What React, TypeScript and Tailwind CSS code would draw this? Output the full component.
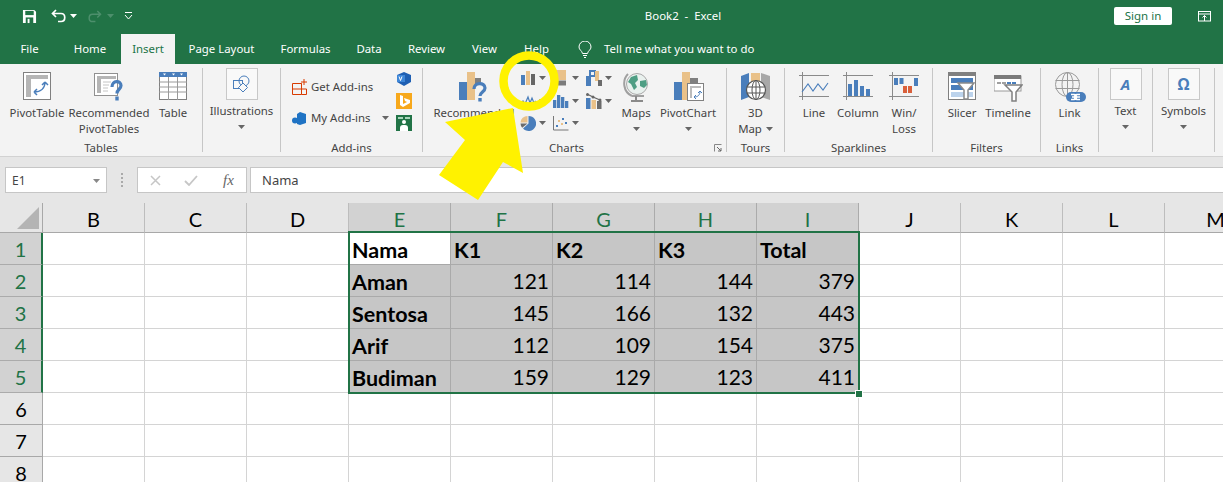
import React from "react";

const BLUE = "#4a7ebb";
const ORANGE = "#e9c189";
const GRAY = "#7f7f7f";

const Caret = ({ color = "#666" }: { color?: string }) => (
  <svg width="7" height="4" viewBox="0 0 7 4" className="shrink-0"><path d="M0 0h7L3.500 4z" fill={color} /></svg>
);

const I = ({ w, children, h = 33 }: { w: number; h?: number; children: React.ReactNode }) => (
  <svg width={w} height={h} viewBox={`0 0 ${w} ${h}`} fill="none" className="block shrink-0">{children}</svg>
);

const PivotTableIcon = () => (
  <I w={29}>
    <rect x="0.500" y="0.500" width="27" height="27" fill="#fff" stroke="#808080" />
    <rect x="3" y="3" width="22" height="4" fill="#b5b5b5" />
    <rect x="3" y="3" width="5" height="22" fill="#b5b5b5" />
    <path d="M12 21c7 0 11-4 11-10M12 21l3-3M12 21l3 3M23 11l-3 3M23 11l3 3" stroke={BLUE} strokeWidth="1.500" transform="translate(-1 -1)" />
  </I>
);
const RecPivotIcon = () => (
  <I w={30}>
    <rect x="0.500" y="1.500" width="23" height="22" fill="#fff" stroke="#909090" />
    <rect x="3" y="4" width="19" height="3" fill="#b5b5b5" />
    <rect x="3" y="4" width="4" height="17" fill="#b5b5b5" />
    <path d="M9 10h8M9 13h6M9 16h5M9 19h5" stroke="#c4c4c4" />
    <path d="M18 15c0-7 9-7 9-1.500 0 4-4 3.500-4 8" stroke={BLUE} strokeWidth="3.200" />
    <rect x="21.300" y="24.500" width="3.400" height="4" fill={BLUE} />
  </I>
);
const TableIcon = () => (
  <I w={28}>
    <rect x="0.500" y="0.500" width="27" height="27" fill="#fff" stroke="#808080" />
    <rect x="0" y="0" width="28" height="5" fill={BLUE} />
    <path d="M4 1.500h3L5.500 3.500zM13 1.500h3l-1.500 2zM21 1.500h3l-1.500 2z" fill="#fff" />
    <path d="M0 10h28M0 15h28M0 20h28M9.500 5v23M18.500 5v23" stroke="#9a9a9a" />
  </I>
);
const BoxBtn = ({ children }: { children: React.ReactNode }) => (
  <div className="w-[32px] h-[32px] border border-[#c8c8c8] bg-[#f9f9f9] flex items-center justify-center">{children}</div>
);

const RecChartIcon = () => (
  <I w={30}>
    <rect x="0" y="10" width="8" height="18" fill={BLUE} />
    <rect x="8" y="0" width="8" height="28" fill={ORANGE} />
    <rect x="16" y="6" width="6" height="6" fill={GRAY} />
    <path d="M15 17c0-7 11-7 11-1 0 4-5 4-5 8" stroke={BLUE} strokeWidth="3.200" fill="none" />
    <rect x="19.300" y="26" width="3.400" height="3.500" fill={BLUE} />
  </I>
);
const ColIcon = () => (
  <I w={16} h={16}><rect x="1" y="5" width="4" height="10" fill={BLUE} /><rect x="6" y="1" width="4" height="14" fill={ORANGE} /><rect x="11" y="4" width="4" height="11" fill="#666" /></I>
);
const LineIcon = () => (
  <I w={17} h={16}><path d="M0 11l3-3 2 3 3-7 2 6 2-5 2 5 2-2" stroke={BLUE} strokeWidth="1.200" /><path d="M0 14l3-2 3 2 3-4 3 3 4-2" stroke={ORANGE} strokeWidth="1.200" /></I>
);
const PieIcon = () => (
  <I w={16} h={16}>
    <path d="M8.500 1a7.500 7.500 0 1 1-5.500 12.500L8.500 8.500z" fill={BLUE} />
    <path d="M7.500 1a7 7 0 0 0-7 6.500h7z" fill={ORANGE} />
    <path d="M7.500 8.500H.500a7 7 0 0 0 1.700 4.300z" fill="#6b6b6b" />
  </I>
);
const HierIcon = () => (
  <I w={16} h={16}><rect x="2" y="0" width="11" height="10" fill={ORANGE} /><rect x="2" y="10.500" width="11" height="5" fill="#7b7b7b" /></I>
);
const HistIcon = () => (
  <I w={16} h={16}><rect x="0" y="7" width="3.300" height="8" fill={BLUE} /><rect x="4" y="2" width="3.300" height="13" fill={BLUE} /><rect x="8" y="4" width="3.300" height="11" fill={BLUE} /><rect x="12" y="8" width="3.300" height="7" fill={BLUE} /></I>
);
const ScatterIcon = () => (
  <I w={16} h={16}>
    <path d="M.500 1v14h15" stroke="#777" />
    <rect x="3" y="10" width="2" height="2" fill={BLUE} /><rect x="5" y="5" width="2" height="2" fill={ORANGE} /><rect x="8" y="8" width="2" height="2" fill={ORANGE} /><rect x="9" y="3" width="2" height="2" fill={BLUE} /><rect x="12" y="7" width="2" height="2" fill={BLUE} />
  </I>
);
const WaterfallIcon = () => (
  <I w={16} h={16}><rect x="0" y="6" width="5" height="10" fill={BLUE} /><rect x="4" y="1" width="5" height="5" fill="none" stroke={BLUE} strokeWidth="2" /><rect x="9" y="1" width="4" height="10" fill={ORANGE} /><rect x="12" y="10" width="4" height="6" fill="#6b6b6b" /></I>
);
const ComboIcon = () => (
  <I w={16} h={16}>
    <rect x="0" y="5" width="4.500" height="11" fill={BLUE} /><rect x="5.500" y="7" width="4.500" height="9" fill={ORANGE} /><rect x="11" y="8" width="4.500" height="8" fill="#6b6b6b" />
    <path d="M1 1l6 3 7 3" stroke="#666" strokeWidth="1.300" /><circle cx="1.500" cy="1.500" r="1.500" fill="#666" /><circle cx="7" cy="4" r="1.500" fill="#666" /><circle cx="14" cy="7" r="1.500" fill="#666" />
  </I>
);
const MapsIcon = () => (
  <I w={27}>
    <circle cx="14" cy="12" r="10.500" fill="#e9f1ee" stroke="#a9a9a9" />
    <path d="M8 5l6-2 1 5-3 3 2 4-3 3-3-6-3-2zM17 9l6-1 1 5-3 3-4-2z" fill="#4f9e84" />
    <path d="M5 2C-1 8 0 20 9 24M9 24h12" stroke="#a0a0a0" strokeWidth="2" />
    <path d="M13 24v4M8 29h12" stroke="#8a8a8a" strokeWidth="2" />
  </I>
);
const PivotChartIcon = () => (
  <I w={31}>
    <rect x="1" y="10" width="8" height="18" fill={BLUE} />
    <rect x="9" y="0" width="8" height="28" fill={ORANGE} />
    <rect x="17" y="6" width="8" height="7" fill={GRAY} />
    <rect x="14.500" y="11.500" width="16" height="17" fill="#fff" stroke="#808080" />
    <rect x="17" y="14" width="11" height="2" fill="#bcbcbc" /><rect x="17" y="14" width="2" height="12" fill="#bcbcbc" />
    <path d="M21 25c4 0 6-2 6-6M21 25l2-2M21 25l2 2M27 19l-2 2M27 19l2 2" stroke={BLUE} />
  </I>
);
const Map3DIcon = () => (
  <I w={30}>
    <path d="M0 4l8-3v24l-8 3z" fill={BLUE} /><path d="M10 1l9 0v24h-9z" fill={ORANGE} /><path d="M20 1l9 3v24l-9-3z" fill="#a8a8a8" />
    <circle cx="15" cy="18" r="9.500" fill="#fff" stroke="#555" strokeWidth="1.200" />
    <ellipse cx="15" cy="18" rx="4" ry="9.500" stroke="#555" /><path d="M6 15h18M6 21h18M15 8.500v19" stroke="#555" />
  </I>
);
const SparkAxes = () => (
  <path d="M0 3.500h30M0 24.500h30M3.500 0v28" stroke="#8a8a8a" />
);
const SparkLine = () => (
  <I w={30} h={33}><SparkAxes /><path d="M3 20l6-8 5 7 5-7 5 6 5-7" stroke={BLUE} strokeWidth="1.100" /></I>
);
const SparkCol = () => (
  <I w={30} h={33}><SparkAxes /><rect x="5" y="12" width="4" height="12" fill={BLUE} /><rect x="11" y="8" width="4" height="16" fill={BLUE} /><rect x="17" y="14" width="4" height="10" fill={BLUE} /><rect x="23" y="17" width="4" height="7" fill={BLUE} /></I>
);
const SparkWin = () => (
  <I w={30} h={33}><path d="M0 3.500h30M0 24.500h30M3.500 0v28" stroke="#8a8a8a" /><rect x="5" y="6" width="4" height="7" fill={BLUE} /><rect x="10.500" y="6" width="4" height="6" fill={BLUE} /><rect x="14" y="14" width="4" height="7" fill="#d9603b" /><rect x="19" y="14" width="4" height="7" fill="#d9603b" /><rect x="25" y="6" width="4" height="8" fill={BLUE} /></I>
);
const SlicerIcon = () => (
  <I w={28}>
    <rect x="0.500" y="0.500" width="27" height="27" fill="#fff" stroke="#808080" />
    <rect x="0" y="0" width="28" height="4" fill="#808080" />
    <rect x="3" y="6" width="22" height="5" fill={BLUE} />
    <rect x="3" y="13" width="22" height="5" fill={BLUE} />
    <rect x="3" y="20" width="22" height="5" fill="#bcd3ec" />
    <path d="M10 11h16l-6 7v9h-4v-9z" fill="#fff" stroke="#8a8a8a" strokeWidth="1.500" />
  </I>
);
const TimelineIcon = () => (
  <I w={29}>
    <rect x="0" y="4" width="27" height="15" fill="#fff" stroke="#9a9a9a" />
    <rect x="0" y="3" width="27" height="4" fill="#7a7a7a" />
    <path d="M3 11h4M8 11h4" stroke="#a0a0a0" strokeWidth="2" /><path d="M13 11h4M18 11h4" stroke={BLUE} strokeWidth="2" />
    <path d="M11 13h17l-6 7v9h-4v-9z" fill="#fff" stroke="#808080" strokeWidth="1.500" />
  </I>
);
const LinkIcon = () => (
  <I w={32}>
    <circle cx="13.500" cy="12.500" r="12" stroke="#9a9a9a" />
    <ellipse cx="13.500" cy="12.500" rx="5.500" ry="12" stroke="#9a9a9a" />
    <path d="M1.500 8.500h24M1.500 16.500h24M13.500 0.500v24" stroke="#9a9a9a" />
    <rect x="12" y="20" width="20" height="10" rx="5" fill={BLUE} />
    <path d="M17 22.500h3a2.500 2.500 0 0 1 0 5h-3M26 22.500h-3a2.500 2.500 0 0 0 0 5h3M18 25h8" stroke="#fff" strokeWidth="1.500" />
  </I>
);

const Label = ({ children }: { children: React.ReactNode }) => (
  <div className="text-[11.400px] leading-[16px] text-[#444] text-center whitespace-nowrap">{children}</div>
);

const Large = ({ w, icon, l1, l2, caret }: { w: number; icon: React.ReactNode; l1: string; l2?: React.ReactNode; caret?: boolean }) => (
  <div className="flex flex-col items-center shrink-0" style={{ width: w }}>
    <div className="h-[33px] mt-[8px] flex justify-center">{icon}</div>
    <Label>{l1}</Label>
    {l2 && <Label>{l2}</Label>}
    {caret && <div className="h-[16px] flex items-center"><Caret /></div>}
  </div>
);

const Boxed = ({ w, icon, label }: { w: number; icon: React.ReactNode; label: string }) => (
  <div className="flex flex-col items-center shrink-0" style={{ width: w }}>
    <div className="mt-[4px]"><BoxBtn>{icon}</BoxBtn></div>
    <div className="mt-[3px]"><Label>{label}</Label></div>
    <div className="h-[16px] flex items-center"><Caret /></div>
  </div>
);

const Group = ({ w, label, children, launcher }: { w: number; label?: string; children: React.ReactNode; launcher?: boolean }) => (
  <div className="flex shrink-0" style={{ width: w }}>
    <div className="flex flex-col flex-1 min-w-0">
      <div className="h-[76px] flex">{children}</div>
      <div className="h-[16px] flex">
        <div className="flex-1 text-[11.400px] leading-[16px] text-[#444] text-center whitespace-nowrap">{label}</div>
        {launcher && (
          <div className="w-[16px] flex items-center justify-center">
            <svg width="8" height="8" viewBox="0 0 8 8" fill="none"><path d="M0.500 7.500v-7h7" stroke="#888" /><path d="M3 3l4 4M7 4v3H4" stroke="#666" /></svg>
          </div>
        )}
      </div>
    </div>
    <div className="w-px my-[4px] bg-[#c6c6c6]" />
  </div>
);

const Small = ({ icon }: { icon: React.ReactNode }) => (
  <div className="h-[22.500px] w-[33px] flex items-center">
    <div className="w-[18px] flex justify-center">{icon}</div>
    <div className="ml-[2px]"><Caret /></div>
  </div>
);

const tabs: [string, number][] = [["File", 59], ["Home", 62], ["Insert", 54], ["Page Layout", 93], ["Formulas", 75], ["Data", 52], ["Review", 63], ["View", 53], ["Help", 51]];

const COLS = ["B", "C", "D", "E", "F", "G", "H", "I", "J", "K", "L", "M"];
const DATA = [
  ["Nama", "K1", "K2", "K3", "Total"],
  ["Aman", 121, 114, 144, 379],
  ["Sentosa", 145, 166, 132, 443],
  ["Arif", 112, 109, 154, 375],
  ["Budiman", 159, 129, 123, 411],
];

const Cell = ({ row, col }: { row: number; col: number }) => {
  const val = row < 5 && col >= 3 && col <= 7 ? DATA[row][col - 3] : undefined;
  const sel = val !== undefined;
  const white = row === 0 && col === 3;
  const num = typeof val === "number";
  const cls = sel
    ? white
      ? "bg-white border-[#a8a8a8]"
      : "bg-[#c6c6c6] border-[#aaaaaa]"
    : "bg-white border-[#d4d4d4]";
  return (
    <div className={`w-[102px] shrink-0 h-full border-r border-b ${cls} flex items-center text-black ${num ? "text-[21px] justify-end pr-[3px] pt-px" : "text-[21.500px] justify-start pl-[3px] pt-[3px] font-bold"}`}>
      {val}
    </div>
  );
};

export default function App() {
  return (
    <div className="relative w-[1223px] h-[482px] overflow-hidden bg-white font-['Noto_Sans','Open_Sans',sans-serif]">
      {/* Title bar */}
      <div className="h-[32px] mb-[2px] bg-[#217346] flex items-center text-white shadow-[0_2px_0_#217346]">
        <div className="flex items-center ml-[22px] w-[559px] shrink-0">
          <svg width="15" height="15" viewBox="0 0 16 16"><path d="M1 1h12l2 2v12H1z" fill="#fff" /><rect x="3.500" y="2" width="9" height="4.500" fill="#217346" /><rect x="4" y="9" width="8" height="6" fill="#217346" /><rect x="6" y="10.500" width="2" height="4.500" fill="#fff" /></svg>
          <svg className="ml-[14px]" width="16" height="14" viewBox="0 0 16 14" fill="none"><path d="M5 1L1.500 4.500 5 8M2 4.500h8c5 0 5 8 0 8H7" stroke="#fff" strokeWidth="1.700" /></svg>
          <div className="ml-[3px]"><Caret color="#fff" /></div>
          <svg className="ml-[10px]" width="15" height="13" viewBox="0 0 16 14" fill="none"><path d="M11 1l3.500 3.500L11 8M14 4.500H6c-5 0-5 8 0 8h3" stroke="#4d8f6c" strokeWidth="1.600" /></svg>
          <div className="ml-[5px]"><Caret color="#4d8f6c" /></div>
          <svg className="ml-[10px]" width="9" height="8" viewBox="0 0 9 8" fill="none"><path d="M1 .500h7" stroke="#fff" /><path d="M1 3l3.500 4L8 3" stroke="#fff" /></svg>
        </div>
        <div className="w-[200px] ml-[2px] mr-[331px] text-center text-[11.400px] whitespace-pre shrink-0">Book2  -  Excel</div>
        <div className="w-[58px] h-[18px] rounded-[2px] bg-white text-[#217346] text-[11.500px] leading-[18px] text-center shrink-0">Sign in</div>
        <svg className="ml-[26px] shrink-0" width="13" height="11" viewBox="0 0 13 11" fill="none"><rect x=".500" y=".500" width="12" height="9.500" stroke="#fff" /><path d="M0 3h13" stroke="#fff" /><path d="M6.500 10V4.500M4.500 6.500l2-2 2 2" stroke="#fff" /></svg>
      </div>
      {/* Tabs */}
      <div className="h-[30px] bg-[#217346] flex text-[11.400px] text-white">
        {tabs.map(([t, w]) => (
          <div key={t} style={{ width: w }} className={`flex items-center justify-center shrink-0 ${t === "Insert" ? "bg-[#f3f3f3] text-[#217346]" : ""}`}>{t}</div>
        ))}
        <div className="flex items-center ml-[16px]">
          <svg width="14" height="17" viewBox="0 0 14 17" fill="none"><path d="M4.500 12.500C4 9.500 1 9 1 6a6 6 0 0 1 12 0c0 3-3 3.500-3.500 6.500z" stroke="#fff" /><path d="M5 14.500h4M6 16.500h2" stroke="#fff" /></svg>
          <span className="ml-[12px]">Tell me what you want to do</span>
        </div>
      </div>
      {/* Ribbon */}
      <div className="h-[93px] bg-[#f3f3f3] border-b border-[#d2d2d2] flex">
        <Group w={203} label="Tables">
          <Large w={74} icon={<PivotTableIcon />} l1="PivotTable" />
          <Large w={70} icon={<RecPivotIcon />} l1="Recommended" l2="PivotTables" />
          <Large w={58} icon={<TableIcon />} l1="Table" />
        </Group>
        <Group w={78}>
          <Boxed w={77} label="Illustrations" icon={
            <svg width="18" height="18" viewBox="0 0 18 18" fill="none"><rect x=".500" y="5.500" width="9" height="8" stroke={BLUE} /><circle cx="11" cy="6" r="5" stroke={BLUE} /><path d="M10 8l4.500 4.500L10 17l-4.500-4.500z" fill="#f9f9f9" stroke={BLUE} /></svg>
          } />
        </Group>
        <Group w={142} label="Add-ins">
          <div className="ml-[11px] w-[104px] pt-[12px] flex flex-col gap-[9px] text-[11.400px] text-[#444]">
            <div className="h-[22px] flex items-center gap-[4px] whitespace-nowrap">
              <svg width="15" height="16" viewBox="0 0 15 16" fill="none"><path d="M.500 4.500h9v11h-9zM.500 10h14v5.500h-5M9.500 10V4.500M12 0v6M9 3h6" stroke="#d83b01" /></svg>
              Get Add-ins
            </div>
            <div className="h-[22px] flex items-center whitespace-nowrap">
              <svg width="15" height="15" viewBox="0 0 15 15"><path d="M8 1l6 2v9l-6 2-3-1V3z" fill="#1f73c4" /><circle cx="3" cy="9.500" r="3" fill="#1f73c4" /></svg>
              <span className="ml-[4px]">My Add-ins</span>
              <div className="ml-[11px]"><Caret /></div>
            </div>
          </div>
          <div className="pt-[7px] flex flex-col gap-[6px]">
            <svg width="16" height="16" viewBox="0 0 16 16"><path d="M8 1l7 3v7l-7 4-7-4V4z" fill="#1e5fb3" /><rect x="1" y="4" width="8" height="7" fill="#3d86d8" /><path d="M3 5.500l1.500 4 1.500-4" stroke="#fff" fill="none" /></svg>
            <svg width="16" height="16" viewBox="0 0 16 16"><rect width="16" height="16" fill="#f7a81b" /><path d="M4 2l3 1v8l4-2-2-1-1-3 6 2v3l-7 4-3-2z" fill="#fff" /></svg>
            <svg width="16" height="16" viewBox="0 0 16 16"><rect width="16" height="16" fill="#217346" /><rect x="2" y="2" width="5" height="2" fill="#a8d5ba" /><rect x="9" y="2" width="5" height="2" fill="#a8d5ba" /><circle cx="8" cy="7" r="2" fill="#fff" /><path d="M4 16v-3a3 3 0 0 1 3-3h2a3 3 0 0 1 3 3v3z" fill="#fff" /></svg>
          </div>
        </Group>
        <Group w={304} label="Charts" launcher>
          <div className="ml-[6px]"><Large w={90} icon={<RecChartIcon />} l1="Recommended" l2="Charts" /></div>
          <div className="flex mt-[3px] h-[68px]">
            <div className="flex flex-col"><Small icon={<ColIcon />} /><Small icon={<LineIcon />} /><Small icon={<PieIcon />} /></div>
            <div className="flex flex-col"><Small icon={<HierIcon />} /><Small icon={<HistIcon />} /><Small icon={<ScatterIcon />} /></div>
            <div className="flex flex-col"><Small icon={<WaterfallIcon />} /><Small icon={<ComboIcon />} /></div>
          </div>
          <Large w={36} icon={<MapsIcon />} l1="Maps" caret />
          <Large w={68} icon={<PivotChartIcon />} l1="PivotChart" caret />
        </Group>
        <Group w={58} label="Tours">
          <Large w={57} icon={<Map3DIcon />} l1="3D" l2={<span className="inline-flex items-center gap-[4px]">Map <Caret /></span>} />
        </Group>
        <Group w={148} label="Sparklines">
          <div className="ml-[10px]"><Large w={38} icon={<SparkLine />} l1="Line" /></div>
          <Large w={50} icon={<SparkCol />} l1="Column" />
          <Large w={42} icon={<SparkWin />} l1="Win/" l2="Loss" />
        </Group>
        <Group w={108} label="Filters">
          <div className="ml-[10px]"><Large w={38} icon={<SlicerIcon />} l1="Slicer" /></div>
          <Large w={54} icon={<TimelineIcon />} l1="Timeline" />
        </Group>
        <Group w={58} label="Links">
          <Large w={57} icon={<LinkIcon />} l1="Link" />
        </Group>
        <Group w={54}>
          <Boxed w={53} label="Text" icon={<span className="text-[15px] leading-none font-bold italic text-[#4a7ebb]">A</span>} />
        </Group>
        <Group w={62}>
          <Boxed w={61} label="Symbols" icon={<span className="text-[16px] leading-none font-bold text-[#4a7ebb]">Ω</span>} />
        </Group>
      </div>
      {/* Formula bar */}
      <div className="h-[46px] bg-[#e6e6e6] flex items-start pt-[10px] text-[12px] text-[#444]">
        <div className="ml-[5px] w-[102px] h-[26px] bg-white border border-[#c6c6c6] flex items-center justify-between pl-[6px] pr-[6px] pt-px">
          E1 <Caret color="#888" />
        </div>
        <div className="w-[30px] h-[26px] flex flex-col items-center justify-center gap-[2px]">
          <div className="w-[2px] h-[2px] bg-[#aaa]" /><div className="w-[2px] h-[2px] bg-[#aaa]" /><div className="w-[2px] h-[2px] bg-[#aaa]" /><div className="w-[2px] h-[2px] bg-[#aaa]" />
        </div>
        <div className="w-[110px] h-[26px] bg-white border border-[#c6c6c6] flex items-center">
          <svg className="ml-[12px]" width="11" height="11" viewBox="0 0 11 11" fill="none"><path d="M1 1l9 9M10 1l-9 9" stroke="#c6c6c6" strokeWidth="1.500" /></svg>
          <svg className="ml-[23px]" width="14" height="11" viewBox="0 0 14 11" fill="none"><path d="M1 6l4 4 8-9" stroke="#c6c6c6" strokeWidth="1.800" /></svg>
          <span className="ml-[25px] text-[15px] leading-none italic font-['Liberation_Serif',serif] text-[#666]">fx</span>
        </div>
        <div className="ml-[3px] flex-1 h-[26px] bg-white border border-[#c6c6c6] border-r-0 flex items-center pl-[11px] pt-px text-[13px]">Nama</div>
      </div>
      {/* Sheet */}
      <div className="relative font-['Lato','Carlito',sans-serif]">
        <div className="h-[30px] flex bg-[#e6e6e6]">
          <div className="w-[43px] shrink-0 h-full border-r border-b border-[#a8a8a8] flex items-end justify-end pr-[3px] pb-[3px]">
            <svg width="22" height="22" viewBox="0 0 22 22"><path d="M22 0v22H0z" fill="#b4b4b4" /></svg>
          </div>
          {COLS.map((c, i) => {
            const sel = i >= 3 && i <= 7;
            return (
              <div key={c} className={`w-[102px] shrink-0 h-full border-r border-b flex items-center justify-center pt-[2px] text-[20px] ${sel ? "bg-[#d2d2d2] text-[#217346] border-r-[#ababab] border-b-[#217346]" : "text-black border-r-[#bdbdbd] border-b-[#a8a8a8]"}`}>{c}</div>
            );
          })}
        </div>
        {[0, 1, 2, 3, 4, 5, 6, 7].map((r) => (
          <div key={r} className="h-[32px] flex">
            <div className={`w-[43px] shrink-0 h-full border-b flex items-center justify-center text-[20px] ${r < 5 ? "bg-[#d2d2d2] text-[#217346] border-b-[#ababab] border-r-2 border-r-[#217346]" : "bg-[#e6e6e6] text-black border-b-[#a8a8a8] border-r border-r-[#a8a8a8]"}`}>{r + 1}</div>
            {COLS.map((_, c) => <Cell key={c} row={r} col={c} />)}
          </div>
        ))}
        {/* Selection */}
        <div className="absolute left-[348px] top-[28px] w-[512px] h-[163px] border-2 border-[#217346] pointer-events-none" />
        <div className="absolute left-[856px] top-[188px] w-[6px] h-[6px] bg-[#217346] outline outline-1 outline-white" />
      </div>
      {/* Annotation */}
      <svg className="absolute left-0 top-0 pointer-events-none" width="1223" height="482" viewBox="0 0 1223 482" fill="none">
        <circle cx="529" cy="81" r="25.500" stroke="#fff200" strokeWidth="8.500" />
        <path d="M513 108L445 122L465 140L439 175L478 200L503 162L523 173z" fill="#fff200" />
      </svg>
    </div>
  );
}
